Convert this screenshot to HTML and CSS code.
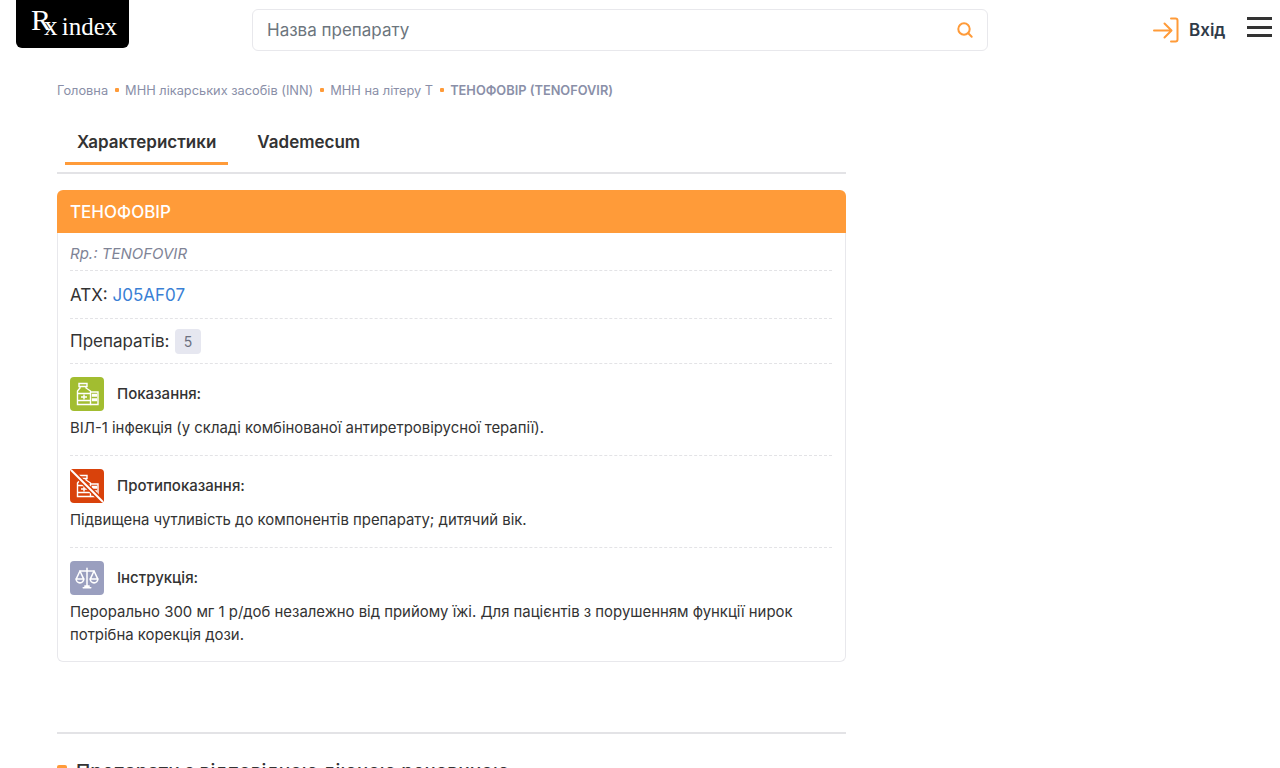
FILE: index.html
```html
<!DOCTYPE html>
<html lang="uk">
<head>
    <meta charset="UTF-8">
    <title>ТЕНОФОВІР (TENOFOVIR)</title>
    <link rel="stylesheet" href="styles.css">
</head>
<body>
    <header class="topbar">
        <a class="logo" href="#"><span class="logo-r">R</span><span class="logo-x">x</span> index</a>
        <form class="search">
            <input class="search-input" type="text" placeholder="Назва препарату">
            <svg class="search-icon" width="18" height="18" viewBox="0 0 18 18" fill="none" stroke="#ff9b39" stroke-width="2" stroke-linecap="round">
                <circle cx="8" cy="8" r="5.7"/>
                <path d="M12.3 12.3l3.4 3.4"/>
            </svg>
        </form>
        <a class="login" href="#">
            <svg width="27" height="26" viewBox="0 0 27 26" fill="none" stroke="#ff9b39" stroke-width="2" stroke-linecap="round" stroke-linejoin="round">
                <path d="M1 13.500h17M11.500 6.500l7 7-7 7"/>
                <path d="M18 1.500h4.500a2 2 0 0 1 2 2v19a2 2 0 0 1-2 2H18"/>
            </svg>
            <span>Вхід</span>
        </a>
        <button class="burger" type="button"><i></i><i></i><i></i></button>
    </header>

    <main class="content">
        <nav class="crumbs">
            <a href="#">Головна</a><i></i>
            <a href="#">МНН лікарських засобів (INN)</a><i></i>
            <a href="#">МНН на літеру Т</a><i></i>
            <b>ТЕНОФОВІР (TENOFOVIR)</b>
        </nav>

        <div class="tabs">
            <a class="tab active" href="#">Характеристики</a>
            <a class="tab" href="#">Vademecum</a>
        </div>

        <section class="card">
            <h1 class="card-title">ТЕНОФОВІР</h1>
            <div class="card-body">
                <div class="row row-latin">Rp.: TENOFOVIR</div>
                <div class="row row-big">АТХ: <a href="#">J05AF07</a></div>
                <div class="row row-big row-count">Препаратів: <span class="badge">5</span></div>

                <div class="info">
                    <h3 class="info-head">
                        <span class="info-icon green">
                            <svg width="24" height="24" viewBox="0 0 24 24" fill="none" stroke="#fff" stroke-width="1.400">
                                <path d="M4 1.500h8v3H4z"/>
                                <path d="M5 4.500V6L2.500 9v13.500h13V9L11 6V4.500"/>
                                <path d="M2.500 11.500h13M2.500 18.500h13"/>
                                <path d="M6 15h6M9 12.500v5"/>
                                <path d="M15.500 10h7.500v12.500h-7.500"/>
                                <path d="M17.500 12.500h1.500V14h-1.500zM20 12.500h1.500V14H20zM17.500 17h1.500v1.500h-1.500zM20 17h1.500v1.500H20z"/>
                            </svg>
                        </span>
                        Показання:
                    </h3>
                    <p>ВІЛ-1 інфекція (у складі комбінованої антиретровірусної терапії).</p>
                </div>

                <div class="info">
                    <h3 class="info-head">
                        <span class="info-icon red">
                            <svg width="34" height="34" viewBox="0 0 34 34" fill="none" stroke="#fff" stroke-width="1.400">
                                <path d="M9 6.500h8v3H9z"/>
                                <path d="M10 9.500V11l-2.500 3v13.500h13V14L16 11V9.500"/>
                                <path d="M7.500 16.500h13M7.500 23.500h13"/>
                                <path d="M11 20h6M14 17.500v5"/>
                                <path d="M20.500 15H28v12.500h-7.500"/>
                                <path d="M22.500 17.500H24V19h-1.500zM25 17.500h1.500V19H25zM22.500 22H24v1.500h-1.500zM25 22h1.500v1.500H25z"/>
                                <path d="M1 1l32 32" stroke="#d9420b" stroke-width="5"/>
                                <path d="M1 1l32 32" stroke-width="2"/>
                            </svg>
                        </span>
                        Протипоказання:
                    </h3>
                    <p>Підвищена чутливість до компонентів препарату; дитячий вік.</p>
                </div>

                <div class="info">
                    <h3 class="info-head">
                        <span class="info-icon slate">
                            <svg width="26" height="26" viewBox="0 0 24 24" fill="none" stroke="#fff" stroke-width="1.400" stroke-linecap="round" stroke-linejoin="round">
                                <path d="M12 3v17M8.500 21h7M10 19.500h4"/>
                                <path d="M5.500 5.500h13"/>
                                <path d="M5.500 5.500L2 13h7zM18.500 5.500L15 13h7z"/>
                                <path d="M2 13a3.500 3.500 0 0 0 7 0M15 13a3.500 3.500 0 0 0 7 0"/>
                            </svg>
                        </span>
                        Інструкція:
                    </h3>
                    <p>Перорально 300 мг 1 р/доб незалежно від прийому їжі. Для пацієнтів з порушенням функції нирок потрібна корекція дози.</p>
                </div>
            </div>
        </section>

        <section class="related">
            <h2 class="related-title">Препарати з відповідною діючою речовиною</h2>
        </section>
    </main>
</body>
</html>
```

FILE: styles.css
```css
html, body {
    height: 768px;
    overflow: hidden;
}
body {
    margin: 0;
    padding: 0;
    background-color: #fff;
    font-family: Inter, "Noto Sans", sans-serif;
    color: #333;
}
a {
    text-decoration: none;
}

.topbar {
    display: flex;
    align-items: flex-start;
    height: 68px;
    padding-left: 16px;
}
.logo {
    display: block;
    box-sizing: border-box;
    width: 113px;
    height: 48px;
    padding: 5px 0 0 15px;
    background-color: #000;
    border-radius: 0 0 6px 6px;
    color: #fff;
    font-family: "Liberation Serif", serif;
    font-size: 25px;
    line-height: 32px;
    white-space: pre;
}
.logo-r {
    font-size: 30px;
    vertical-align: 5px;
    line-height: 1;
}
.logo-x {
    font-size: 27px;
    margin-left: -7px;
    margin-right: -2px;
}
.search {
    display: flex;
    align-items: center;
    box-sizing: border-box;
    width: 736px;
    height: 42px;
    margin: 9px 0 0 123px;
    padding: 0 13px 0 14px;
    border: 1px solid #e8e8ec;
    border-radius: 6px;
}
.search-input {
    flex: 1;
    border: none;
    outline: none;
    padding: 0;
    font-family: inherit;
    font-size: 17px;
    color: #6c757d;
}
.search-input::placeholder {
    color: #6c757d;
    opacity: 1;
}
.login {
    display: flex;
    align-items: center;
    gap: 9px;
    margin: 17px 0 0 165px;
    color: #2f3a48;
    font-size: 17px;
    font-weight: 600;
}
.burger {
    display: flex;
    flex-direction: column;
    justify-content: space-between;
    width: 25px;
    height: 20px;
    margin: 17px 0 0 22px;
    padding: 0;
    border: none;
    background: none;
}
.burger i {
    display: block;
    height: 3px;
    background-color: #333;
}

.content {
    width: 789px;
    margin-left: 57px;
}
.crumbs {
    display: flex;
    align-items: center;
    gap: 6.500px;
    height: 18px;
    margin-top: 13px;
    font-size: 12.800px;
    color: #8a8fa8;
}
.crumbs a {
    color: #8a8fa8;
}
.crumbs i {
    width: 4px;
    height: 4px;
    background-color: #ff9b39;
    border-radius: 1px;
}
.crumbs b {
    font-weight: 600;
}
.tabs {
    display: flex;
    gap: 5px;
    margin-top: 22px;
    padding-left: 8px;
    padding-bottom: 7px;
    border-bottom: 2px solid #e3e3e6;
}
.tab {
    padding: 10px 12px 9px;
    border-bottom: 3px solid transparent;
    color: #333;
    font-size: 17px;
    font-weight: 600;
    line-height: 22px;
}
.tab.active {
    border-bottom-color: #ff9b39;
}
.tab + .tab {
    margin-left: 12px;
}

.card {
    margin-top: 16px;
}
.card-title {
    margin: 0;
    padding: 0 13px;
    height: 43px;
    line-height: 44px;
    background-color: #ff9b39;
    border-radius: 6px 6px 0 0;
    color: #fff;
    font-size: 17px;
    font-weight: 500;
}
.card-body {
    padding: 0 13px 4px 12px;
    border: 1px solid #e8e8ec;
    border-top: none;
    border-radius: 0 0 6px 6px;
}
.row {
    box-sizing: border-box;
    border-bottom: 1px dashed #e3e3e6;
}
.row-latin {
    height: 38px;
    line-height: 42px;
    font-size: 15px;
    font-style: italic;
    color: #7f8496;
}
.row-big {
    height: 48px;
    line-height: 48px;
    font-size: 17px;
}
.row-big a {
    color: #3a7fd5;
}
.row-count {
    display: flex;
    align-items: center;
    gap: 5.500px;
    height: 45px;
}
.badge {
    width: 26px;
    height: 25px;
    line-height: 25px;
    text-align: center;
    font-size: 14px;
    background-color: #e6e7f0;
    border-radius: 4px;
    color: #6c7080;
}
.info {
    padding: 13px 0 0;
    height: 92px;
    box-sizing: border-box;
    border-bottom: 1px dashed #e3e3e6;
}
.info:last-child {
    height: auto;
    border-bottom: none;
}
.info-head {
    display: flex;
    align-items: center;
    gap: 13px;
    margin: 0;
    font-size: 15px;
    font-weight: 500;
    line-height: 20px;
}
.info-icon {
    display: flex;
    align-items: center;
    justify-content: center;
    width: 34px;
    height: 34px;
    border-radius: 4px;
}
.green {
    background-color: #a2bd30;
}
.red {
    background-color: #d9420b;
}
.slate {
    background-color: #9a9fbf;
}
.info p {
    margin: 6px 0 0;
    font-size: 14.900px;
    line-height: 23px;
}
.info:last-child p {
    margin-bottom: 10px;
}

.related {
    margin-top: 70px;
    padding-top: 25px;
    border-top: 2px solid #e3e3e6;
}
.related-title {
    position: relative;
    margin: 0;
    padding-left: 19px;
    font-size: 19.200px;
    font-weight: 500;
    line-height: 24px;
    color: #333;
}
.related-title::before {
    content: "";
    position: absolute;
    left: 0;
    top: 6px;
    width: 10px;
    height: 10px;
    border-radius: 2px;
    background-color: #ff9b39;
}
```
